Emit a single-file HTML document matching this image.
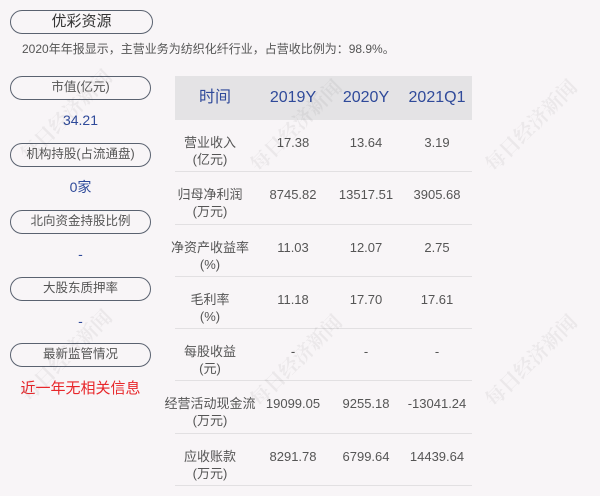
<!DOCTYPE html>
<html><head><meta charset="utf-8"><style>
*{margin:0;padding:0;box-sizing:border-box}
body{width:600px;height:496px;background:#f8f5f7;font-family:"Liberation Sans","Noto Sans CJK SC",sans-serif;position:relative;overflow:hidden;color:#555}
.pill{position:absolute;left:10px;width:141px;height:24px;border:1.5px solid #5a6270;border-radius:12px;text-align:center;font-size:12.5px;line-height:21px;color:#555;background:#f8f5f7}
.val{position:absolute;left:10px;width:141px;text-align:center;font-size:14px;color:#2f4a9a;line-height:18px}
.tbl{position:absolute;left:175px;top:76px;width:297px}
.hd{height:44px;background:#e4e3e5;position:relative;color:#2f4a9a;font-size:16px}
.row{height:52.3px;border-bottom:1px solid #e2e0e2;position:relative;font-size:13px;color:#555}
.c{position:absolute;text-align:center;width:80px;transform:translateX(-50%);line-height:17px}
.hd .c{line-height:20px}
.wm{position:absolute;font-size:20px;color:rgba(0,0,0,0.05);font-family:"Noto Serif CJK SC",serif;transform:rotate(-45deg);white-space:nowrap;font-weight:bold}
</style></head><body>
<div class="pill" style="top:10px;width:143px;font-size:15px;line-height:21px;color:#333">优彩资源</div>
<div style="position:absolute;left:22px;top:40px;font-size:12px;color:#555">2020年年报显示，主营业务为纺织化纤行业，占营收比例为：98.9%。</div>

<div class="pill" style="top:76px">市值(亿元)</div>
<div class="val" style="top:111px">34.21</div>
<div class="pill" style="top:143px">机构持股(占流通盘)</div>
<div class="val" style="top:178px">0家</div>
<div class="pill" style="top:210px">北向资金持股比例</div>
<div class="val" style="top:245px">-</div>
<div class="pill" style="top:277px">大股东质押率</div>
<div class="val" style="top:312px">-</div>
<div class="pill" style="top:343px">最新监管情况</div>
<div class="val" style="top:380px;color:#e8262a;font-size:15px">近一年无相关信息</div>

<div class="tbl">
<div class="hd"><span class="c" style="left:40px;top:12px">时间</span><span class="c" style="left:118px;top:12px">2019Y</span><span class="c" style="left:191px;top:12px">2020Y</span><span class="c" style="left:262px;top:12px">2021Q1</span></div>
<div class="row"><span class="c" style="left:35px;top:14px">营业收入<br>(亿元)</span><span class="c" style="left:118px;top:14px">17.38</span><span class="c" style="left:191px;top:14px">13.64</span><span class="c" style="left:262px;top:14px">3.19</span></div>
<div class="row"><span class="c" style="left:35px;top:14px">归母净利润<br>(万元)</span><span class="c" style="left:118px;top:14px">8745.82</span><span class="c" style="left:191px;top:14px">13517.51</span><span class="c" style="left:262px;top:14px">3905.68</span></div>
<div class="row"><span class="c" style="left:35px;top:14px;width:100px">净资产收益率<br>(%)</span><span class="c" style="left:118px;top:14px">11.03</span><span class="c" style="left:191px;top:14px">12.07</span><span class="c" style="left:262px;top:14px">2.75</span></div>
<div class="row"><span class="c" style="left:35px;top:14px">毛利率<br>(%)</span><span class="c" style="left:118px;top:14px">11.18</span><span class="c" style="left:191px;top:14px">17.70</span><span class="c" style="left:262px;top:14px">17.61</span></div>
<div class="row"><span class="c" style="left:35px;top:14px">每股收益<br>(元)</span><span class="c" style="left:118px;top:14px">-</span><span class="c" style="left:191px;top:14px">-</span><span class="c" style="left:262px;top:14px">-</span></div>
<div class="row"><span class="c" style="left:35px;top:14px;width:100px">经营活动现金流<br>(万元)</span><span class="c" style="left:118px;top:14px">19099.05</span><span class="c" style="left:191px;top:14px">9255.18</span><span class="c" style="left:262px;top:14px">-13041.24</span></div>
<div class="row"><span class="c" style="left:35px;top:14px">应收账款<br>(万元)</span><span class="c" style="left:118px;top:14px">8291.78</span><span class="c" style="left:191px;top:14px">6799.64</span><span class="c" style="left:262px;top:14px">14439.64</span></div>
</div>

<div class="wm" style="left:5px;top:100px">每日经济新闻</div>
<div class="wm" style="left:235px;top:110px">每日经济新闻</div>
<div class="wm" style="left:470px;top:110px">每日经济新闻</div>
<div class="wm" style="left:5px;top:340px">每日经济新闻</div>
<div class="wm" style="left:235px;top:345px">每日经济新闻</div>
<div class="wm" style="left:470px;top:345px">每日经济新闻</div>
</body></html>
